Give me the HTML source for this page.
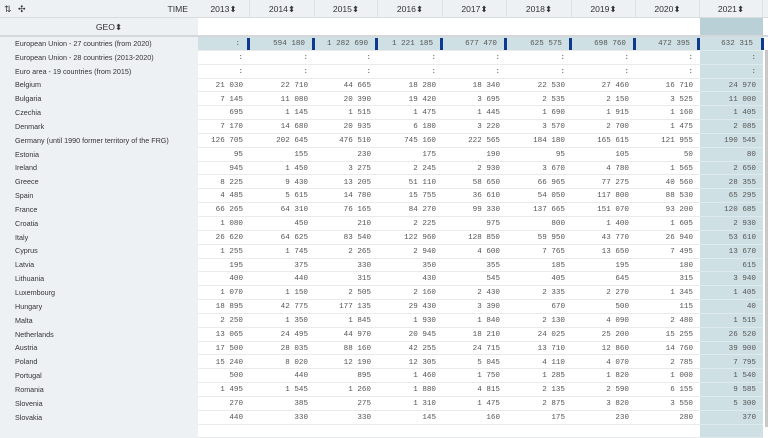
<!DOCTYPE html>
<html><head><meta charset="utf-8"><style>
*{box-sizing:border-box;margin:0;padding:0}
body{width:768px;height:427px;overflow:hidden;background:#fff;font-family:"Liberation Sans",sans-serif;position:relative}
.r{display:flex;height:13.85px}
.c{flex:none;display:flex;align-items:center;justify-content:flex-end;padding-right:7px;padding-top:3px;font-family:"Liberation Mono",monospace;font-size:7.6px;line-height:1;color:#555;border-bottom:1px solid #e8eaec;position:relative}
.l{flex:none;width:198px;display:flex;align-items:center;background:#eef1f4;padding-left:15px;font-size:7.2px;line-height:1;color:#333;white-space:nowrap;overflow:hidden;border-bottom:1px solid #eef1f4}
.w1{width:52px}.w2{width:65px}.w3{width:63px}.w4{width:65px}.w5{width:64px}.w6{width:65px}.w7{width:64px}.w8{width:64px}.w9{width:63px;background:#cfe0e4;border-bottom-color:#dfeaed}
.hd{position:absolute;left:0;top:0;width:768px;height:18px;background:#eef1f4;border-bottom:1px solid #d8dcdf;display:flex;font-size:8.6px;color:#333;line-height:18px}
.hd div{flex:none;text-align:center;border-right:1px solid #dde1e4}
.geo{position:absolute;left:0;top:18px;width:768px;height:19px;border-bottom:2px solid #d4d8db;display:flex}
.eu .c{background:#cfe0e4;padding-right:10px}
.eu .c::after{content:"";position:absolute;right:0;top:1px;width:3px;height:12px;background:#0d3a8c}
.eu .w9::after{right:-1px}
</style></head><body>
<div class="hd">
<div style="width:198px;text-align:left;position:relative;border-right:none"><span style="position:absolute;left:4px;font-size:9px">⇅</span><span style="position:absolute;left:18px;font-size:9px">✣</span><span style="position:absolute;right:10px">TIME</span></div>
<div class="w1">2013⬍</div><div class="w2">2014⬍</div><div class="w3">2015⬍</div><div class="w4">2016⬍</div><div class="w5">2017⬍</div><div class="w6">2018⬍</div><div class="w7">2019⬍</div><div class="w8">2020⬍</div><div class="w9" style="background:#eef1f4">2021⬍</div>
</div>
<div class="geo"><div style="width:198px;background:#eef1f4;text-align:center;font-size:8.6px;color:#333;line-height:18px;padding-left:20px">GEO⬍</div><div style="width:502px"></div><div style="width:63px;background:#b9d0d6"></div></div>
<div style="position:absolute;left:765px;top:50px;width:3px;height:377px;background:#c8c8c8"></div>
<div style="position:absolute;left:0;top:37px">
<div class="r eu"><div class="l">European Union - 27 countries (from 2020)</div><div class="c w1">:</div><div class="c w2">594 180</div><div class="c w3">1 282 690</div><div class="c w4">1 221 185</div><div class="c w5">677 470</div><div class="c w6">625 575</div><div class="c w7">698 760</div><div class="c w8">472 395</div><div class="c w9">632 315</div></div>
<div class="r"><div class="l">European Union - 28 countries (2013-2020)</div><div class="c w1">:</div><div class="c w2">:</div><div class="c w3">:</div><div class="c w4">:</div><div class="c w5">:</div><div class="c w6">:</div><div class="c w7">:</div><div class="c w8">:</div><div class="c w9">:</div></div>
<div class="r"><div class="l">Euro area - 19 countries (from 2015)</div><div class="c w1">:</div><div class="c w2">:</div><div class="c w3">:</div><div class="c w4">:</div><div class="c w5">:</div><div class="c w6">:</div><div class="c w7">:</div><div class="c w8">:</div><div class="c w9">:</div></div>
<div class="r"><div class="l">Belgium</div><div class="c w1">21 030</div><div class="c w2">22 710</div><div class="c w3">44 665</div><div class="c w4">18 280</div><div class="c w5">18 340</div><div class="c w6">22 530</div><div class="c w7">27 460</div><div class="c w8">16 710</div><div class="c w9">24 970</div></div>
<div class="r"><div class="l">Bulgaria</div><div class="c w1">7 145</div><div class="c w2">11 080</div><div class="c w3">20 390</div><div class="c w4">19 420</div><div class="c w5">3 695</div><div class="c w6">2 535</div><div class="c w7">2 150</div><div class="c w8">3 525</div><div class="c w9">11 000</div></div>
<div class="r"><div class="l">Czechia</div><div class="c w1">695</div><div class="c w2">1 145</div><div class="c w3">1 515</div><div class="c w4">1 475</div><div class="c w5">1 445</div><div class="c w6">1 690</div><div class="c w7">1 915</div><div class="c w8">1 160</div><div class="c w9">1 405</div></div>
<div class="r"><div class="l">Denmark</div><div class="c w1">7 170</div><div class="c w2">14 680</div><div class="c w3">20 935</div><div class="c w4">6 180</div><div class="c w5">3 220</div><div class="c w6">3 570</div><div class="c w7">2 700</div><div class="c w8">1 475</div><div class="c w9">2 085</div></div>
<div class="r"><div class="l">Germany (until 1990 former territory of the FRG)</div><div class="c w1">126 705</div><div class="c w2">202 645</div><div class="c w3">476 510</div><div class="c w4">745 160</div><div class="c w5">222 565</div><div class="c w6">184 180</div><div class="c w7">165 615</div><div class="c w8">121 955</div><div class="c w9">190 545</div></div>
<div class="r"><div class="l">Estonia</div><div class="c w1">95</div><div class="c w2">155</div><div class="c w3">230</div><div class="c w4">175</div><div class="c w5">190</div><div class="c w6">95</div><div class="c w7">105</div><div class="c w8">50</div><div class="c w9">80</div></div>
<div class="r"><div class="l">Ireland</div><div class="c w1">945</div><div class="c w2">1 450</div><div class="c w3">3 275</div><div class="c w4">2 245</div><div class="c w5">2 930</div><div class="c w6">3 670</div><div class="c w7">4 780</div><div class="c w8">1 565</div><div class="c w9">2 650</div></div>
<div class="r"><div class="l">Greece</div><div class="c w1">8 225</div><div class="c w2">9 430</div><div class="c w3">13 205</div><div class="c w4">51 110</div><div class="c w5">58 650</div><div class="c w6">66 965</div><div class="c w7">77 275</div><div class="c w8">40 560</div><div class="c w9">28 355</div></div>
<div class="r"><div class="l">Spain</div><div class="c w1">4 485</div><div class="c w2">5 615</div><div class="c w3">14 780</div><div class="c w4">15 755</div><div class="c w5">36 610</div><div class="c w6">54 050</div><div class="c w7">117 800</div><div class="c w8">88 530</div><div class="c w9">65 295</div></div>
<div class="r"><div class="l">France</div><div class="c w1">66 265</div><div class="c w2">64 310</div><div class="c w3">76 165</div><div class="c w4">84 270</div><div class="c w5">99 330</div><div class="c w6">137 665</div><div class="c w7">151 070</div><div class="c w8">93 200</div><div class="c w9">120 685</div></div>
<div class="r"><div class="l">Croatia</div><div class="c w1">1 080</div><div class="c w2">450</div><div class="c w3">210</div><div class="c w4">2 225</div><div class="c w5">975</div><div class="c w6">800</div><div class="c w7">1 400</div><div class="c w8">1 605</div><div class="c w9">2 930</div></div>
<div class="r"><div class="l">Italy</div><div class="c w1">26 620</div><div class="c w2">64 625</div><div class="c w3">83 540</div><div class="c w4">122 960</div><div class="c w5">128 850</div><div class="c w6">59 950</div><div class="c w7">43 770</div><div class="c w8">26 940</div><div class="c w9">53 610</div></div>
<div class="r"><div class="l">Cyprus</div><div class="c w1">1 255</div><div class="c w2">1 745</div><div class="c w3">2 265</div><div class="c w4">2 940</div><div class="c w5">4 600</div><div class="c w6">7 765</div><div class="c w7">13 650</div><div class="c w8">7 495</div><div class="c w9">13 670</div></div>
<div class="r"><div class="l">Latvia</div><div class="c w1">195</div><div class="c w2">375</div><div class="c w3">330</div><div class="c w4">350</div><div class="c w5">355</div><div class="c w6">185</div><div class="c w7">195</div><div class="c w8">180</div><div class="c w9">615</div></div>
<div class="r"><div class="l">Lithuania</div><div class="c w1">400</div><div class="c w2">440</div><div class="c w3">315</div><div class="c w4">430</div><div class="c w5">545</div><div class="c w6">405</div><div class="c w7">645</div><div class="c w8">315</div><div class="c w9">3 940</div></div>
<div class="r"><div class="l">Luxembourg</div><div class="c w1">1 070</div><div class="c w2">1 150</div><div class="c w3">2 505</div><div class="c w4">2 160</div><div class="c w5">2 430</div><div class="c w6">2 335</div><div class="c w7">2 270</div><div class="c w8">1 345</div><div class="c w9">1 405</div></div>
<div class="r"><div class="l">Hungary</div><div class="c w1">18 895</div><div class="c w2">42 775</div><div class="c w3">177 135</div><div class="c w4">29 430</div><div class="c w5">3 390</div><div class="c w6">670</div><div class="c w7">500</div><div class="c w8">115</div><div class="c w9">40</div></div>
<div class="r"><div class="l">Malta</div><div class="c w1">2 250</div><div class="c w2">1 350</div><div class="c w3">1 845</div><div class="c w4">1 930</div><div class="c w5">1 840</div><div class="c w6">2 130</div><div class="c w7">4 090</div><div class="c w8">2 480</div><div class="c w9">1 515</div></div>
<div class="r"><div class="l">Netherlands</div><div class="c w1">13 065</div><div class="c w2">24 495</div><div class="c w3">44 970</div><div class="c w4">20 945</div><div class="c w5">18 210</div><div class="c w6">24 025</div><div class="c w7">25 200</div><div class="c w8">15 255</div><div class="c w9">26 520</div></div>
<div class="r"><div class="l">Austria</div><div class="c w1">17 500</div><div class="c w2">28 035</div><div class="c w3">88 160</div><div class="c w4">42 255</div><div class="c w5">24 715</div><div class="c w6">13 710</div><div class="c w7">12 860</div><div class="c w8">14 760</div><div class="c w9">39 900</div></div>
<div class="r"><div class="l">Poland</div><div class="c w1">15 240</div><div class="c w2">8 020</div><div class="c w3">12 190</div><div class="c w4">12 305</div><div class="c w5">5 045</div><div class="c w6">4 110</div><div class="c w7">4 070</div><div class="c w8">2 785</div><div class="c w9">7 795</div></div>
<div class="r"><div class="l">Portugal</div><div class="c w1">500</div><div class="c w2">440</div><div class="c w3">895</div><div class="c w4">1 460</div><div class="c w5">1 750</div><div class="c w6">1 285</div><div class="c w7">1 820</div><div class="c w8">1 000</div><div class="c w9">1 540</div></div>
<div class="r"><div class="l">Romania</div><div class="c w1">1 495</div><div class="c w2">1 545</div><div class="c w3">1 260</div><div class="c w4">1 880</div><div class="c w5">4 815</div><div class="c w6">2 135</div><div class="c w7">2 590</div><div class="c w8">6 155</div><div class="c w9">9 585</div></div>
<div class="r"><div class="l">Slovenia</div><div class="c w1">270</div><div class="c w2">385</div><div class="c w3">275</div><div class="c w4">1 310</div><div class="c w5">1 475</div><div class="c w6">2 875</div><div class="c w7">3 820</div><div class="c w8">3 550</div><div class="c w9">5 300</div></div>
<div class="r"><div class="l">Slovakia</div><div class="c w1">440</div><div class="c w2">330</div><div class="c w3">330</div><div class="c w4">145</div><div class="c w5">160</div><div class="c w6">175</div><div class="c w7">230</div><div class="c w8">280</div><div class="c w9">370</div></div>
<div class="r"><div class="l"></div><div class="c w1"></div><div class="c w2"></div><div class="c w3"></div><div class="c w4"></div><div class="c w5"></div><div class="c w6"></div><div class="c w7"></div><div class="c w8"></div><div class="c w9"></div></div>
</div>
</body></html>
